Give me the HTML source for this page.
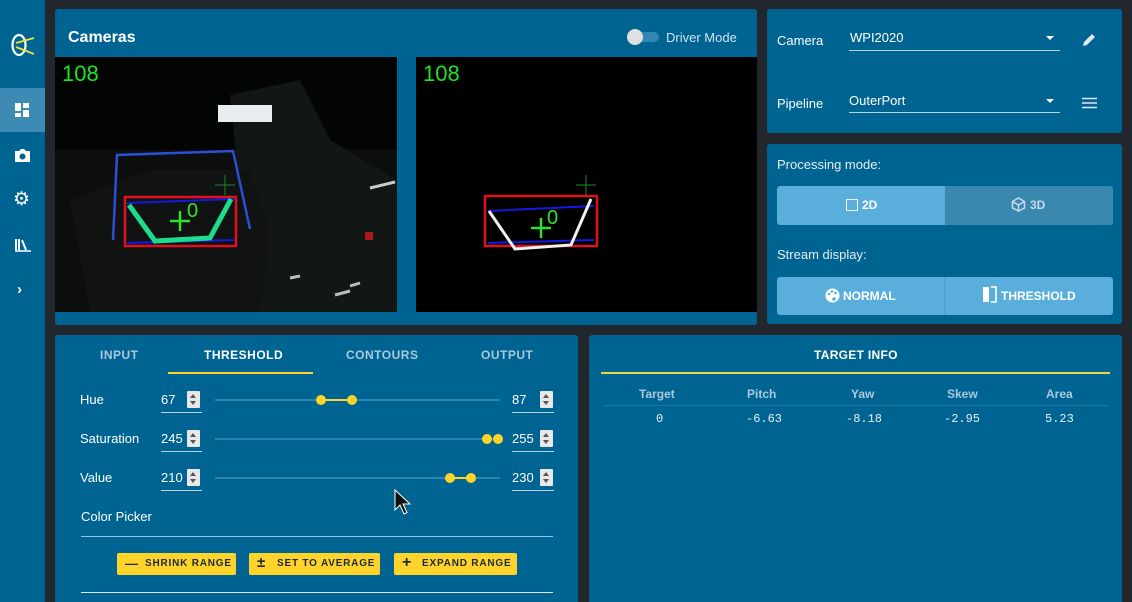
<!DOCTYPE html>
<html><head><meta charset="utf-8"><style>
*{box-sizing:border-box;margin:0;padding:0}
html,body{width:1132px;height:602px;overflow:hidden}
body{background:#22272e;font-family:"Liberation Sans",sans-serif;color:#fff;position:relative}
.abs{position:absolute}
.card{position:absolute;background:#006492;border-radius:3px}
.side{left:0;top:0;width:45px;height:602px;background:#006492}
.t{position:absolute;white-space:nowrap}
.spin{position:absolute;width:13px;height:17px;background:#e8e8e8;border-radius:1px}
.spin:before{content:"";position:absolute;left:3px;top:3px;border-left:3.5px solid transparent;border-right:3.5px solid transparent;border-bottom:4px solid #555}
.spin:after{content:"";position:absolute;left:3px;top:10px;border-left:3.5px solid transparent;border-right:3.5px solid transparent;border-top:4px solid #555}
.ul{position:absolute;height:1px;background:#b9d3e2}
.track{position:absolute;height:2px;background:#2f84ad}
.dot{position:absolute;width:10px;height:10px;border-radius:50%;background:#ffd42a}
.seg{position:absolute;height:2px;background:#ffd42a}
.btn{position:absolute;height:22px;background:#ffd42a;border-radius:2px;color:#1d2a33;font-size:10px;font-weight:bold;letter-spacing:.8px;line-height:22px;white-space:nowrap}
.btn span{white-space:nowrap}
</style></head><body>
<div class="abs side"></div>
<div class="abs" style="left:0;top:88px;width:45px;height:44px;background:#3d8bb4"></div>
<svg class="abs" style="left:8px;top:30px" width="30" height="30" viewBox="0 0 30 30"><ellipse cx="11" cy="15" rx="6.5" ry="10" fill="none" stroke="#fff" stroke-width="2.2"/><path d="M8 13 L26 8 M8 17 L26 24" stroke="#f2e13a" stroke-width="1.8"/></svg>
<svg class="abs" style="left:15px;top:103px" width="15" height="14"><rect x="0" y="0" width="6" height="8" fill="#fff"/><rect x="8" y="0" width="6" height="5" fill="#fff"/><rect x="0" y="10" width="6" height="4" fill="#fff"/><rect x="8" y="7" width="6" height="7" fill="#fff"/></svg>
<svg class="abs" style="left:14px;top:148px" width="17" height="15"><path d="M1 3h4l2-2h3l2 2h4v11H1z" fill="#fff"/><circle cx="8.5" cy="8.5" r="3" fill="#006492"/></svg>
<div class="t" style="left:13px;top:190px;font-size:19px;line-height:20px">⚙</div>
<svg class="abs" style="left:15px;top:238px" width="16" height="14"><path d="M1 1v11M4 1v11M7 2l4 10" stroke="#fff" stroke-width="2"/><path d="M0 13h16" stroke="#fff" stroke-width="1.5"/></svg>
<div class="t" style="left:17px;top:281px;font-size:15px;font-weight:bold">›</div>

<div class="card" style="left:55px;top:9px;width:702px;height:316px"></div>
<div class="t" style="left:68px;top:29px;font-size:16px;font-weight:bold">Cameras</div>
<div class="abs" style="left:629px;top:32px;width:30px;height:10px;border-radius:5px;background:#3486b0"></div>
<div class="abs" style="left:627px;top:29px;width:16px;height:16px;border-radius:50%;background:#e0e0e0"></div>
<div class="t" style="left:666px;top:30px;font-size:13px;color:#cfe2ee">Driver Mode</div>
<svg class="abs" style="left:55px;top:57px" width="342" height="255" viewBox="55 57 342 255">
<rect x="55" y="57" width="342" height="255" fill="#030504"/>
<rect x="55" y="150" width="342" height="162" fill="#0b0e0d"/>
<path d="M230 95 L300 80 L330 140 L397 180 L397 312 L250 312 L240 190 Z" fill="#121615"/>
<path d="M70 200 L150 170 L250 170 L270 230 L260 312 L90 312 Z" fill="#101312"/>
<rect x="218" y="105" width="54" height="17" fill="#e8eef0"/>
<path d="M113 240 L117 155 L233 151 L250 229" fill="none" stroke="#2d4fd6" stroke-width="2.5"/>
<path d="M370 188 L395 182" stroke="#ccc" stroke-width="3"/>
<path d="M290 278 L300 276 M335 295 L350 291 M350 286 L360 283" stroke="#bbb" stroke-width="3"/>
<rect x="365" y="232" width="8" height="8" fill="#b01818"/>
<path d="M215 185h20M225 175v20" stroke="#1a8a1a" stroke-width="1"/>
<rect x="125" y="197" width="111" height="49" fill="none" stroke="#e0101c" stroke-width="2.5"/>
<path d="M127 203 L234 199 M127 243 L234 240" stroke="#1518e0" stroke-width="2"/>
<path d="M129 205 L155 241 L210 238 L231 199" fill="none" stroke="#1ddc8c" stroke-width="5"/>
<path d="M170 221h20M180 211v20" stroke="#2fe12f" stroke-width="2.5"/>
<text x="187" y="217" fill="#2fe12f" font-family="Liberation Sans" font-size="20">0</text>
<text x="62" y="81" fill="#1ee61e" font-family="Liberation Sans" font-size="22">108</text>
</svg>
<svg class="abs" style="left:416px;top:57px" width="341" height="255" viewBox="416 57 341 255">
<rect x="416" y="57" width="341" height="255" fill="#000"/>
<path d="M576 185h20M586 175v20" stroke="#1a8a1a" stroke-width="1"/>
<rect x="485" y="196" width="112" height="50" fill="none" stroke="#e0101c" stroke-width="2.5"/>
<path d="M488 211 L594 206 M488 243 L594 240" stroke="#1518e0" stroke-width="2"/>
<path d="M489 211 L515 249 L571 245 L591 199" fill="none" stroke="#f2f2f2" stroke-width="3"/>
<path d="M531 228h20M541 218v20" stroke="#2fe12f" stroke-width="2.5"/>
<text x="547" y="224" fill="#2fe12f" font-family="Liberation Sans" font-size="20">0</text>
<text x="423" y="81" fill="#1ee61e" font-family="Liberation Sans" font-size="22">108</text>
</svg>

<div class="card" style="left:767px;top:9px;width:355px;height:124px"></div>
<div class="t" style="left:777px;top:33px;font-size:13px">Camera</div>
<div class="t" style="left:850px;top:30px;font-size:13px">WPI2020</div>
<div class="abs" style="left:1046px;top:36px;border-left:4px solid transparent;border-right:4px solid transparent;border-top:4px solid #fff"></div>
<div class="ul" style="left:849px;top:50px;width:211px"></div>
<svg class="abs" style="left:1081px;top:32px" width="16" height="16"><path d="M2 14 L3 10 L11 2 L14 5 L6 13 Z" fill="#dfe8ee"/></svg>
<div class="t" style="left:777px;top:96px;font-size:13px">Pipeline</div>
<div class="t" style="left:849px;top:93px;font-size:13px">OuterPort</div>
<div class="abs" style="left:1046px;top:99px;border-left:4px solid transparent;border-right:4px solid transparent;border-top:4px solid #fff"></div>
<div class="ul" style="left:849px;top:112px;width:211px"></div>
<svg class="abs" style="left:1082px;top:97px" width="15" height="12"><path d="M0 1.5h15M0 6h15M0 10.5h15" stroke="#dfe8ee" stroke-width="1.6"/></svg>

<div class="card" style="left:767px;top:144px;width:355px;height:180px"></div>
<div class="t" style="left:777px;top:157px;font-size:13px;color:#e6eef3">Processing mode:</div>
<div class="abs" style="left:777px;top:186px;width:168px;height:39px;background:#5aaedb;border-radius:3px 0 0 3px"></div>
<div class="abs" style="left:945px;top:186px;width:168px;height:39px;background:#3a87b0;border-radius:0 3px 3px 0"></div>
<div class="abs" style="left:846px;top:199px;width:12px;height:12px;border:1.5px solid #fff;border-radius:1px"></div>
<div class="t" style="left:862px;top:198px;font-size:12px;font-weight:bold">2D</div>
<svg class="abs" style="left:1011px;top:197px" width="15" height="15"><path d="M7.5 1 L13.5 4.5 V11 L7.5 14 L1.5 11 V4.5 Z M1.5 4.5 L7.5 8 L13.5 4.5 M7.5 8 V14" fill="none" stroke="#c5dcea" stroke-width="1.5"/></svg>
<div class="t" style="left:1030px;top:198px;font-size:12px;font-weight:bold;color:#c5dcea">3D</div>
<div class="t" style="left:777px;top:247px;font-size:13px;color:#e6eef3">Stream display:</div>
<div class="abs" style="left:777px;top:277px;width:336px;height:38px;background:#5aaedb;border-radius:3px"></div>
<div class="abs" style="left:944px;top:277px;width:1px;height:38px;background:#4f9fca"></div>
<svg class="abs" style="left:825px;top:288px" width="15" height="15"><circle cx="7.5" cy="7.5" r="7" fill="#fff"/><circle cx="4" cy="6" r="1.3" fill="#5aaedb"/><circle cx="7" cy="3.5" r="1.3" fill="#5aaedb"/><circle cx="10.5" cy="5" r="1.3" fill="#5aaedb"/><circle cx="9" cy="11" r="1.8" fill="#5aaedb"/></svg>
<div class="t" style="left:843px;top:289px;font-size:12px;font-weight:bold">NORMAL</div>
<svg class="abs" style="left:982px;top:286px" width="16" height="17"><rect x="1" y="1" width="6" height="15" fill="#fff"/><path d="M9 1h5v15h-5" fill="none" stroke="#fff" stroke-width="1.6"/></svg>
<div class="t" style="left:1001px;top:289px;font-size:12px;font-weight:bold">THRESHOLD</div>

<div class="card" style="left:55px;top:335px;width:523px;height:280px"></div>
<div class="t" style="left:100px;top:348px;font-size:12px;font-weight:bold;color:#a9c9dc;letter-spacing:.5px">INPUT</div>
<div class="t" style="left:204px;top:348px;font-size:12px;font-weight:bold;letter-spacing:.5px">THRESHOLD</div>
<div class="abs" style="left:168px;top:372px;width:145px;height:2px;background:#ffd42a"></div>
<div class="t" style="left:346px;top:348px;font-size:12px;font-weight:bold;color:#a9c9dc;letter-spacing:.5px">CONTOURS</div>
<div class="t" style="left:481px;top:348px;font-size:12px;font-weight:bold;color:#a9c9dc;letter-spacing:.5px">OUTPUT</div>

<div class="t" style="left:80px;top:392px;font-size:13px">Hue</div>
<div class="t" style="left:161px;top:392px;font-size:13px">67</div><div class="spin" style="left:187px;top:391px"></div><div class="ul" style="left:161px;top:412px;width:41px"></div>
<div class="track" style="left:215px;top:399px;width:285px"></div>
<div class="seg" style="left:321px;top:399px;width:31px"></div><div class="dot" style="left:316px;top:395px"></div><div class="dot" style="left:347px;top:395px"></div>
<div class="t" style="left:512px;top:392px;font-size:13px">87</div><div class="spin" style="left:540px;top:391px"></div><div class="ul" style="left:512px;top:412px;width:42px"></div>

<div class="t" style="left:80px;top:431px;font-size:13px">Saturation</div>
<div class="t" style="left:161px;top:431px;font-size:13px">245</div><div class="spin" style="left:187px;top:430px"></div><div class="ul" style="left:161px;top:451px;width:41px"></div>
<div class="track" style="left:215px;top:438px;width:285px"></div>
<div class="dot" style="left:482px;top:434px"></div><div class="dot" style="left:493px;top:434px"></div>
<div class="t" style="left:512px;top:431px;font-size:13px">255</div><div class="spin" style="left:540px;top:430px"></div><div class="ul" style="left:512px;top:451px;width:42px"></div>

<div class="t" style="left:80px;top:470px;font-size:13px">Value</div>
<div class="t" style="left:161px;top:470px;font-size:13px">210</div><div class="spin" style="left:187px;top:469px"></div><div class="ul" style="left:161px;top:490px;width:41px"></div>
<div class="track" style="left:215px;top:477px;width:285px"></div>
<div class="seg" style="left:450px;top:477px;width:21px"></div><div class="dot" style="left:445px;top:473px"></div><div class="dot" style="left:466px;top:473px"></div>
<div class="t" style="left:512px;top:470px;font-size:13px">230</div><div class="spin" style="left:540px;top:469px"></div><div class="ul" style="left:512px;top:490px;width:42px"></div>

<svg class="abs" style="left:394px;top:489px" width="18" height="28"><path d="M1 1 L1 21 L6 16 L10 25 L13 23.5 L9 15 L16 15 Z" fill="#111" stroke="#fff" stroke-width="1"/></svg>

<div class="t" style="left:81px;top:509px;font-size:13px">Color Picker</div>
<div class="abs" style="left:81px;top:536px;width:472px;height:1px;background:#9cc4da"></div>
<div class="btn" style="left:117px;top:553px;width:119px"><span style="position:absolute;left:8px;font-size:13px">—</span><span style="position:absolute;left:28px">SHRINK RANGE</span></div>
<div class="btn" style="left:249px;top:553px;width:131px"><span style="position:absolute;left:8px;font-size:15px;top:-1px">±</span><span style="position:absolute;left:28px">SET TO AVERAGE</span></div>
<div class="btn" style="left:394px;top:553px;width:123px"><span style="position:absolute;left:8px;font-size:16px;top:-1px">+</span><span style="position:absolute;left:28px">EXPAND RANGE</span></div>
<div class="abs" style="left:81px;top:592px;width:472px;height:1px;background:#dce9f0"></div>

<div class="card" style="left:589px;top:335px;width:533px;height:280px"></div>
<div class="t" style="left:814px;top:348px;font-size:12px;font-weight:bold;letter-spacing:.3px">TARGET INFO</div>
<div class="abs" style="left:601px;top:372px;width:509px;height:2px;background:#e7d84a"></div>
<div class="t" style="left:639px;top:387px;font-size:12px;font-weight:bold;color:#a9c9dc">Target</div>
<div class="t" style="left:747px;top:387px;font-size:12px;font-weight:bold;color:#a9c9dc">Pitch</div>
<div class="t" style="left:851px;top:387px;font-size:12px;font-weight:bold;color:#a9c9dc">Yaw</div>
<div class="t" style="left:947px;top:387px;font-size:12px;font-weight:bold;color:#a9c9dc">Skew</div>
<div class="t" style="left:1046px;top:387px;font-size:12px;font-weight:bold;color:#a9c9dc">Area</div>
<div class="abs" style="left:604px;top:405px;width:504px;height:1px;background:#1a78a4"></div>
<div style="position:absolute;left:0;top:412px;font-family:'Liberation Mono',monospace;font-size:12px;color:#e6eef3">
<span class="t" style="left:656px">0</span><span class="t" style="left:746px">-6.63</span><span class="t" style="left:846px">-8.18</span><span class="t" style="left:944px">-2.95</span><span class="t" style="left:1045px">5.23</span></div>
</body></html>
